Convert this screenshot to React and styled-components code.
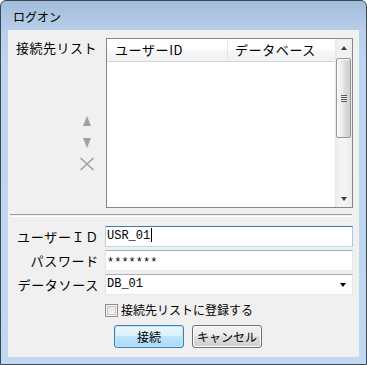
import React from 'react';
import styled, { createGlobalStyle } from 'styled-components';

const GlobalStyle = createGlobalStyle`
	html, body {
		margin: 0;
		padding: 0;
		background: #ffffff;
	}
	body {
		font-family: "Noto Sans CJK JP", "Noto Sans", sans-serif;
		color: #000;
	}
`;

const Window = styled.div`
	box-sizing: border-box;
	width: 367px;
	height: 365px;
	border: 1px solid #3a4957;
	border-radius: 6px 6px 0 0;
	background: linear-gradient(#a3bcda 0, #b7cfe9 29px, #bdd5ee 60px, #c0d8f0 100%);
	display: flex;
	flex-direction: column;
	padding: 0 7px 7px 7px;
`;

const TitleBar = styled.div`
	height: 29px;
	display: flex;
	align-items: center;
	padding: 3px 0 0 5px;
	box-sizing: border-box;
	font-size: 12px;
	line-height: 14px;
	color: #000;
`;

const Client = styled.div`
	flex: 1;
	background: #f0f0f0;
	display: flex;
	flex-direction: column;
`;

const TopSection = styled.div`
	display: flex;
	padding: 8px 6px 0 8px;
`;

const LeftCol = styled.div`
	width: 90px;
	display: flex;
	flex-direction: column;
`;

const SectionLabel = styled.div`
	margin-top: 2px;
	font-size: 13px;
	line-height: 16px;
	letter-spacing: 0.5px;
	white-space: nowrap;
`;

const IconStack = styled.div`
	align-self: flex-end;
	width: 16px;
	margin: 60px 11px 0 0;
	display: flex;
	flex-direction: column;
	align-items: center;
`;

const IconButton = styled.div`
	display: flex;
	margin-top: ${p => p.$gap || 0}px;
	color: #a0a0a0;
`;

const ListBox = styled.div`
	box-sizing: border-box;
	width: 247px;
	height: 170px;
	border: 1px solid #828790;
	background: #fff;
	display: flex;
`;

const ListMain = styled.div`
	flex: 1;
	display: flex;
	flex-direction: column;
`;

const Header = styled.div`
	height: 23px;
	box-sizing: border-box;
	display: flex;
	border-bottom: 1px solid #d5d5d5;
	background: linear-gradient(#ffffff 0%, #ffffff 40%, #f4f5f7 60%, #f1f2f4 100%);
`;

const HeaderCell = styled.div`
	width: ${p => p.$w ? `${p.$w}px` : 'auto'};
	flex: ${p => p.$w ? 'none' : 1};
	box-sizing: border-box;
	padding-left: ${p => p.$pad}px;
	border-right: ${p => p.$w ? '1px solid #e3e5e8' : 'none'};
	font-size: 13px;
	line-height: 22px;
	letter-spacing: 0.6px;
	white-space: nowrap;
	overflow: hidden;
`;

const ScrollBar = styled.div`
	width: 17px;
	display: flex;
	flex-direction: column;
	background: linear-gradient(to right, #e6e6e6 0, #f1f1f1 3px, #f4f4f4 60%, #ececec 100%);
`;

const ScrollArrow = styled.div`
	height: 17px;
	display: flex;
	align-items: center;
	justify-content: center;

	&::after {
		content: '';
		width: 0;
		height: 0;
		border-left: 3.5px solid transparent;
		border-right: 3.5px solid transparent;
		${p => p.$down
			? 'border-top: 4px solid #3c3c3c;'
			: 'border-bottom: 4px solid #3c3c3c;'}
	}
`;

const ScrollTrack = styled.div`
	flex: 1;
	padding: 2px 1px 0 1px;
`;

const Thumb = styled.div`
	box-sizing: border-box;
	height: 80px;
	border: 1px solid #979797;
	border-radius: 2px;
	background: linear-gradient(to right, #f6f6f6 0%, #ececec 40%, #dcdcdc 60%, #cfcfcf 100%);
	box-shadow: inset 1px 1px 0 #fdfdfd;
	display: flex;
	align-items: center;
	justify-content: center;
`;

const Grip = styled.div`
	width: 6px;
	height: 7px;
	background: repeating-linear-gradient(#5a5a5a 0, #5a5a5a 1px, #e8e8e8 1px, #e8e8e8 2px);
`;

const Separator = styled.div`
	margin: 6px 7px 0 2px;
	height: 1px;
	border-top: 1px solid #a0a0a0;
	border-bottom: 1px solid #ffffff;
`;

const FormGrid = styled.div`
	margin-top: 9px;
	display: grid;
	grid-template-columns: 91px 248px;
	column-gap: 6px;
	row-gap: 3px;
`;

const FieldLabel = styled.div`
	text-align: right;
	font-size: 13px;
	line-height: 21px;
	letter-spacing: 0.7px;
	white-space: nowrap;
`;

const Field = styled.div`
	box-sizing: border-box;
	height: 21px;
	background: #fff;
	border: 1px solid;
	border-color: ${p => p.$focus
		? '#3d7bad #a4c9e3 #b7d9ed #b5cfe7'
		: '#abadb3 #e3e9ef #e3e9ef #e2e3ea'};
	display: flex;
	align-items: center;
	padding: 0 6px 0 1px;
	font-family: "Liberation Mono", "DejaVu Sans Mono", monospace;
	font-size: 12px;
	line-height: 19px;
`;

const FieldText = styled.span`
	flex: 1;
	white-space: pre;
	transform: translateY(${p => p.$masked ? 3 : 0}px);
`;

const Caret = styled.span`
	display: inline-block;
	width: 1px;
	height: 14px;
	margin-left: 1px;
	vertical-align: -3px;
	background: #000;
`;

const DropArrow = styled.span`
	width: 0;
	height: 0;
	border-left: 3.5px solid transparent;
	border-right: 3.5px solid transparent;
	border-top: 4px solid #000;
`;

const CheckRow = styled.label`
	margin: 7px 0 0 97px;
	height: 16px;
	display: flex;
	align-items: center;
	font-size: 12px;
	line-height: 16px;
	white-space: nowrap;
`;

const CheckBox = styled.span`
	box-sizing: border-box;
	width: 13px;
	height: 13px;
	margin-right: 3px;
	border: 1px solid #8e8f8f;
	background: linear-gradient(135deg, #d9d9d9 0%, #f4f4f4 70%, #ffffff 100%);
	box-shadow: inset 0 0 0 1px #f4f4f4, inset 0 0 0 2px #c8c8c8;
`;

const ButtonRow = styled.div`
	margin: 7px 0 0 106px;
	display: flex;
	gap: 8px;
`;

const Button = styled.button`
	box-sizing: border-box;
	width: 70px;
	height: 23px;
	padding: 0;
	border: 1px solid ${p => p.$primary ? '#3c7fb1' : '#707070'};
	border-radius: 3px;
	background: ${p => p.$primary
		? 'linear-gradient(#eaf6fd 0%, #d9f0fc 50%, #bee6fd 50%, #a7d9f5 100%)'
		: 'linear-gradient(#f2f2f2 0%, #ebebeb 50%, #dddddd 50%, #cfcfcf 100%)'};
	box-shadow: inset 0 0 0 1px ${p => p.$primary ? '#c4e5f6' : '#fcfcfc'};
	font-family: "Noto Sans CJK JP", "Noto Sans", sans-serif;
	font-size: 12px;
	line-height: 20px;
	color: #000;
`;

const UpIcon = () => (
	<svg width="16" height="10" viewBox="0 0 16 10">
		<polygon points="8,0 12,10 4,10" fill="currentColor" />
	</svg>
);

const DownIcon = () => (
	<svg width="16" height="10" viewBox="0 0 16 10">
		<polygon points="4,0 12,0 8,10" fill="currentColor" />
	</svg>
);

const DeleteIcon = () => (
	<svg width="16" height="14" viewBox="0 0 16 14">
		<path d="M1.5 1 L14.5 13 M14.5 1 L1.5 13" stroke="currentColor" strokeWidth="1.6" fill="none" />
	</svg>
);

export default function App() {
	return (
		<>
			<GlobalStyle />
			<Window>
				<TitleBar>ログオン</TitleBar>
				<Client>
					<TopSection>
						<LeftCol>
							<SectionLabel>接続先リスト</SectionLabel>
							<IconStack>
								<IconButton><UpIcon /></IconButton>
								<IconButton $gap={12}><DownIcon /></IconButton>
								<IconButton $gap={9}><DeleteIcon /></IconButton>
							</IconStack>
						</LeftCol>
						<ListBox>
							<ListMain>
								<Header>
									<HeaderCell $w={121} $pad={8}>ユーザーID</HeaderCell>
									<HeaderCell $pad={7}>データベース</HeaderCell>
								</Header>
							</ListMain>
							<ScrollBar>
								<ScrollArrow />
								<ScrollTrack>
									<Thumb><Grip /></Thumb>
								</ScrollTrack>
								<ScrollArrow $down />
							</ScrollBar>
						</ListBox>
					</TopSection>
					<Separator />
					<FormGrid>
						<FieldLabel>ユーザーＩＤ</FieldLabel>
						<Field $focus><FieldText>USR_01<Caret /></FieldText></Field>
						<FieldLabel>パスワード</FieldLabel>
						<Field><FieldText $masked>*******</FieldText></Field>
						<FieldLabel>データソース</FieldLabel>
						<Field><FieldText>DB_01</FieldText><DropArrow /></Field>
					</FormGrid>
					<CheckRow>
						<CheckBox />
						接続先リストに登録する
					</CheckRow>
					<ButtonRow>
						<Button $primary>接続</Button>
						<Button>キャンセル</Button>
					</ButtonRow>
				</Client>
			</Window>
		</>
	);
}
